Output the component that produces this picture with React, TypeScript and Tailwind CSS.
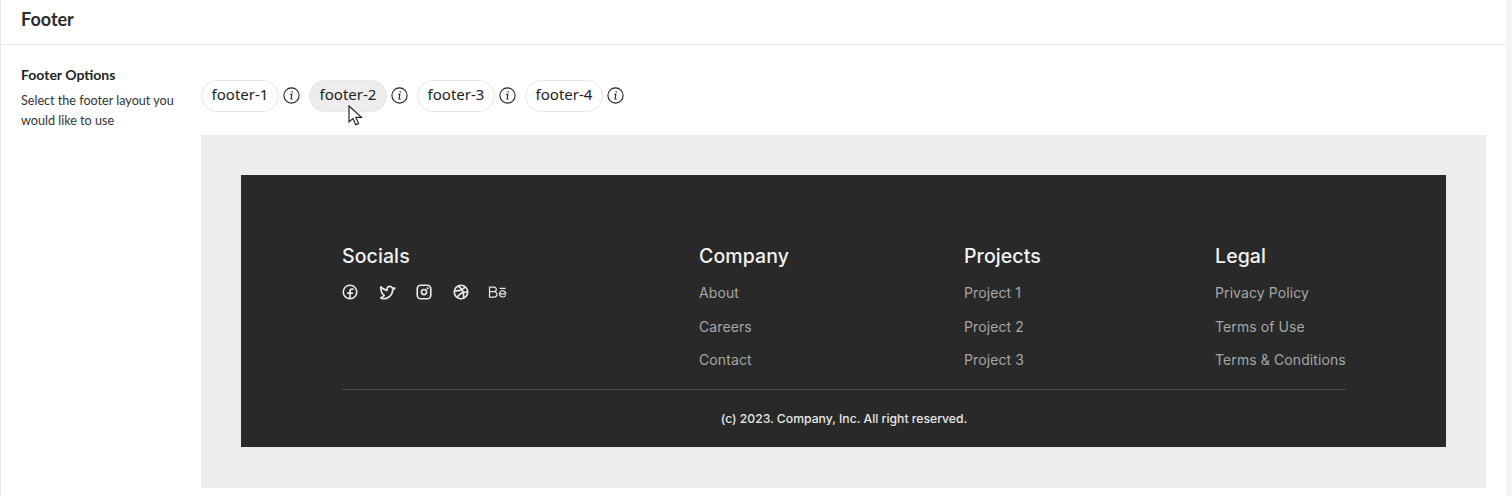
import {
  PiBehanceLogo,
  PiDribbbleLogoBold,
  PiFacebookLogoBold,
  PiInstagramLogoBold,
  PiTwitterLogoBold,
} from 'react-icons/pi'

const footerOptions = ['footer-1', 'footer-2', 'footer-3', 'footer-4']

const linkColumns = [
  { title: 'Company', width: 'w-[265px]', links: ['About', 'Careers', 'Contact'] },
  { title: 'Projects', width: 'w-[251px]', links: ['Project 1', 'Project 2', 'Project 3'] },
  { title: 'Legal', width: 'w-[131px]', links: ['Privacy Policy', 'Terms of Use', 'Terms & Conditions'] },
]

function InfoIcon() {
  return (
    <svg className="mb-[1px] h-[17px] w-[17px] text-[#222]" viewBox="0 0 17 17" fill="none" stroke="currentColor">
      <circle cx="8.5" cy="8.5" r="7.6" strokeWidth="1.1" />
      <path d="M9.2 4.2v1.3" strokeWidth="1.4" />
      <path d="M7.2 7.4h1.7l-.8 4.6h1.5" strokeWidth="1.1" />
    </svg>
  )
}

function Cursor() {
  return (
    <svg className="absolute left-[147px] top-[25px] h-[22px] w-[16px]" viewBox="0 0 16 22">
      <path d="M1 1v16l4-3.6 2.7 6.4 2.9-1.2-2.7-6.2H13.5z" fill="#fff" stroke="#222" strokeWidth="1.2" />
    </svg>
  )
}

export default function App() {
  return (
    <div className="flex h-[496px] w-[1512px] overflow-hidden bg-white font-['Lato',sans-serif] text-[#222]">
      <div className="w-[1px] bg-[#e8e8e8]" />
      <main className="min-w-0 flex-1">
        <header className="flex h-[45px] items-center border-b border-[#ebebeb] pb-[6px] pl-5">
          <h2 className="text-[18px] font-bold leading-none text-[#2b2b2b]">Footer</h2>
        </header>

        <div className="flex pl-5 pt-[20px]">
          <aside className="w-[180px] shrink-0">
            <h3 className="text-[14px] font-bold leading-5">Footer Options</h3>
            <p className="mt-[6px] w-[160px] text-[12.6px] leading-[20px] text-[#333]">
              Select the footer layout you would like to use
            </p>
          </aside>

          <div className="w-[1285px]">
            <div className="relative mt-[15px] flex h-[32px] items-center">
              {footerOptions.map((option, index) => (
                <div key={option} className="mr-[9px] flex items-center gap-[4px]">
                  <button
                    type="button"
                    className={`h-[32px] w-[78px] rounded-full border border-[#e6e6e6] pb-[3px] text-center font-['Noto_Sans',sans-serif] text-[15px] leading-none ${
                      index === 1 ? 'bg-[#ededed]' : 'bg-white'
                    }`}
                  >
                    {option}
                  </button>
                  <InfoIcon />
                </div>
              ))}
              <Cursor />
            </div>

            <section className="mt-[23px] h-[353px] bg-[#ededed] p-10">
              <div className="h-[272px] bg-[#292929] pl-[101px] pr-[100px] pt-[69px]">
                <div className="flex">
                  <div className="w-[357px] shrink-0">
                    <h4 className="font-['Inter',sans-serif] text-[19.5px] font-medium leading-6 tracking-[0.1px] text-[#f2f2f2]">Socials</h4>
                    <div className="-ml-[1px] mt-[12px] flex h-[24px] items-center gap-[19px] text-[18px] text-[#e8e8e8]">
                      <PiFacebookLogoBold />
                      <PiTwitterLogoBold />
                      <PiInstagramLogoBold />
                      <PiDribbbleLogoBold />
                      <PiBehanceLogo className="-ml-[2px] h-[20px] w-[20px]" />
                    </div>
                  </div>
                  {linkColumns.map((column) => (
                    <div key={column.title} className={`${column.width} shrink-0`}>
                      <h4 className="font-['Inter',sans-serif] text-[19.5px] font-medium leading-6 tracking-[0.1px] text-[#f2f2f2]">{column.title}</h4>
                      <ul className="mt-[15px] flex flex-col gap-[13.5px] font-['Inter',sans-serif] text-[14px] leading-[20px] tracking-[0.1px] text-[#a6a6a6]">
                        {column.links.map((link) => (
                          <li key={link} className="whitespace-nowrap">
                            {link}
                          </li>
                        ))}
                      </ul>
                    </div>
                  ))}
                </div>
                <div className="mt-[19px] border-t border-[#4a4a4a] pt-[19px] text-center font-['Inter',sans-serif] text-[12.2px] font-medium leading-[20px] text-[#e8e8e8]">
                  (c) 2023. Company, Inc. All right reserved.
                </div>
              </div>
            </section>
          </div>
        </div>
      </main>
      <div className="w-[6px] bg-[#f4f4f4]" />
    </div>
  )
}
